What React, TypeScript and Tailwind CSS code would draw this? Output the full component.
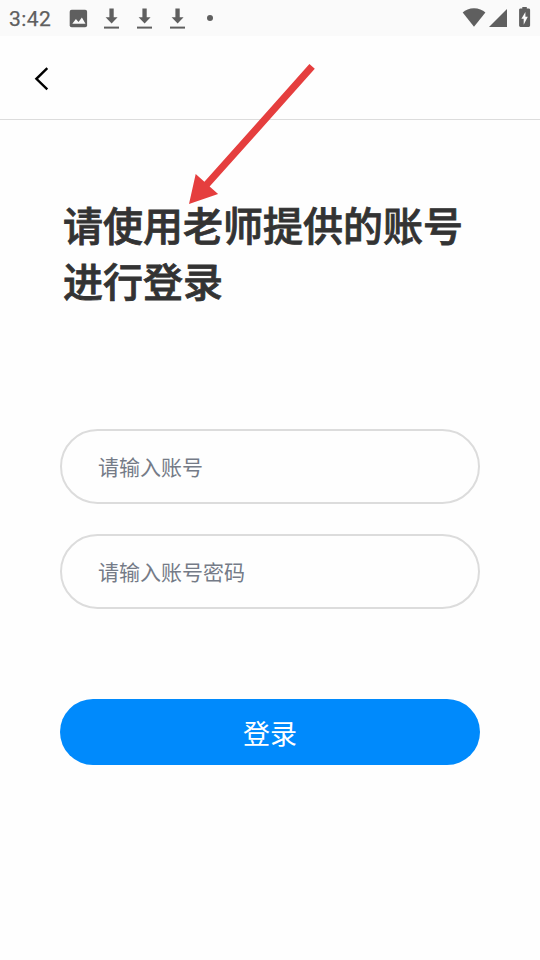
import { useState } from 'react';

function DownloadIcon() {
  return (
    <svg className="h-9 w-[33px]" viewBox="0 0 33 36" fill="#5f5f5f" aria-hidden="true">
      <path d="M14.4 8.5h4.3v8.7h3.9l-6 6.3-6-6.3h3.8z" />
      <path d="M9 26.6h15v2H9z" />
    </svg>
  );
}

function StatusBar() {
  return (
    <div className="flex h-9 shrink-0 items-center bg-[#fafafa] text-[#5f5f5f]">
      <span className="w-[62px] pt-[2px] pl-[9px] font-['Roboto',sans-serif] text-[21px] leading-9 font-normal tracking-[0.4px] [-webkit-text-stroke:0.25px_#5f5f5f]">
        3:42
      </span>
      <svg className="h-9 w-[33px]" viewBox="62 0 33 36" aria-hidden="true">
        <rect x="69.7" y="9.8" width="17.4" height="17.4" rx="2" fill="#5f5f5f" />
        <path d="M72.3 23.7l3.6-4.7 2.6 3 3.4-4.4 3.6 6.1z" fill="#fafafa" />
      </svg>
      <DownloadIcon />
      <DownloadIcon />
      <DownloadIcon />
      <span className="ml-[13px] size-[6px] rounded-full bg-[#5f5f5f]" />
      <svg className="ml-auto h-9 w-[80px]" viewBox="460 0 80 36" fill="#5f5f5f" aria-hidden="true">
        <path d="M474 26.8L462.7 12.4C465.4 10 469.4 8.2 474 8.2s8.6 1.8 11.4 4.2z" />
        <path d="M489 27h18V9z" />
        <path d="M522.3 8.6V7h4.5v1.6h1.9c.8 0 1.4.6 1.4 1.4v15.6c0 .8-.6 1.4-1.4 1.4h-8.2c-.8 0-1.4-.6-1.4-1.4V10c0-.8.6-1.4 1.4-1.4z" />
        <path d="M525.4 12v4.7h2.4l-4.1 8v-5.9h-2.3z" fill="#fafafa" />
      </svg>
    </div>
  );
}

function PointerArrow() {
  return (
    <svg
      className="pointer-events-none absolute top-[60px] left-[180px] h-[150px] w-[140px]"
      viewBox="180 60 140 150"
      fill="#e53e3e"
      aria-hidden="true"
    >
      <path d="M189 204l6.7-30 8.7 7.8L309.4 64l5.4 4.8L209.6 186.6l8.5 7.4z" />
    </svg>
  );
}

const fieldClass =
  'h-[75px] w-full rounded-full border-2 border-[#dcdcdc] bg-transparent px-9 pb-[2px] text-[21px] text-[#333] outline-none placeholder:text-[#757b87] placeholder:opacity-100';

export default function App() {
  const [account, setAccount] = useState('');
  const [password, setPassword] = useState('');

  return (
    <div className="relative flex h-[960px] w-[540px] flex-col overflow-hidden bg-[#fefefe] font-['Noto_Sans_CJK_SC',sans-serif]">
      <StatusBar />
      <header className="flex h-21 shrink-0 items-center border-b border-[#dcdcdc] pt-[2px] pl-[30px]">
        <button type="button" aria-label="返回">
          <svg className="h-6 w-6" viewBox="30 67 24 24" fill="none" stroke="#000" strokeWidth="2.4" aria-hidden="true">
            <path d="M47.3 68.2L36.4 78.8l10.9 10.6" />
          </svg>
        </button>
      </header>

      <main className="px-[60px] pt-[76px]">
        <h1 className="pl-[3px] text-[40px] leading-14 font-medium text-[#333] [-webkit-text-stroke:0.8px_#333]">
          请使用老师提供的账号
          <br />
          进行登录
        </h1>
        <form className="mt-[121px] flex flex-col" onSubmit={(e) => e.preventDefault()}>
          <div className="flex flex-col gap-[30px]">
            <input
              className={fieldClass}
              placeholder="请输入账号"
              value={account}
              onChange={(e) => setAccount(e.target.value)}
            />
            <input
              className={fieldClass}
              type="password"
              placeholder="请输入账号密码"
              value={password}
              onChange={(e) => setPassword(e.target.value)}
            />
          </div>
          <button type="submit" className="mt-[90px] h-[66px] rounded-full bg-[#008afc] pt-[2px] text-[27px] text-white">
            登录
          </button>
        </form>
      </main>
      <PointerArrow />
    </div>
  );
}
